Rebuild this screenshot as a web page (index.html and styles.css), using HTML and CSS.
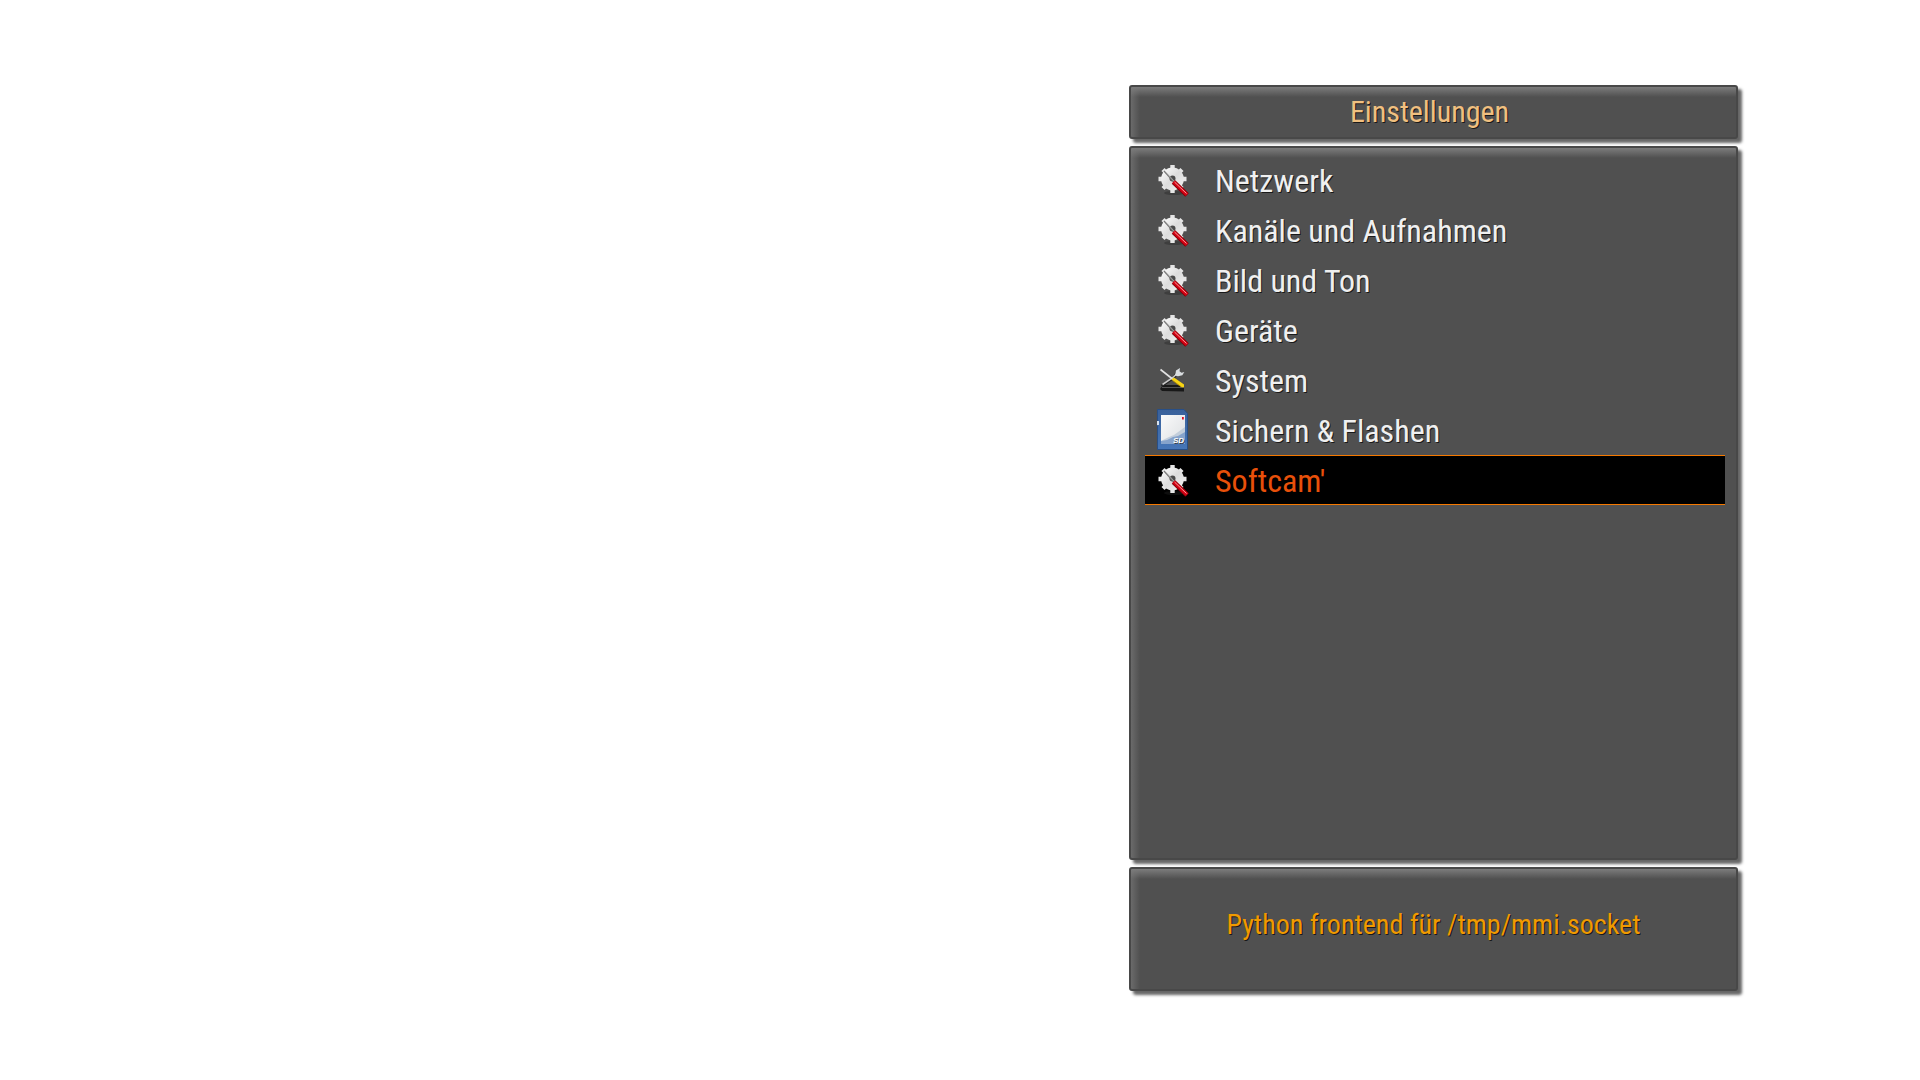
FILE: index.html
```html
<!DOCTYPE html>
<html lang="de">
<head>
  <meta charset="UTF-8">
  <title>Einstellungen</title>
  <link rel="stylesheet" href="styles.css">
</head>
<body>
  <!-- shared icons -->
  <svg class="defs" aria-hidden="true">
    <defs>
      <linearGradient id="metal" x1="0" y1="0" x2="1" y2="1">
        <stop offset="0" stop-color="#fff"/>
        <stop offset="0.5" stop-color="#dcdcdc"/>
        <stop offset="1" stop-color="#f4f4f4"/>
      </linearGradient>
      <linearGradient id="card" x1="0" y1="0" x2="0" y2="1">
        <stop offset="0" stop-color="#3a619a"/>
        <stop offset="1" stop-color="#4676b8"/>
      </linearGradient>
      <linearGradient id="label" x1="0" y1="0" x2="1" y2="1">
        <stop offset="0" stop-color="#fafafa"/>
        <stop offset="1" stop-color="#dcdfe2"/>
      </linearGradient>
      <symbol id="gear" viewBox="0 0 32 32">
        <ellipse cx="17" cy="28" rx="10" ry="2" fill="#222" opacity="0.4"/>
        <path d="M15.500 0v28M1.500 14h28M6 4.500l19 19M25 4.500l-19 19" stroke="#e6e6e6" stroke-width="4.400"/>
        <circle cx="15.500" cy="14" r="11.400" fill="url(#metal)"/>
        <circle cx="15.500" cy="13.500" r="3" fill="#4a4a4a"/>
        <path d="M7 6l10 11" stroke="#777" stroke-width="1.400"/>
        <path d="M8 6l9 10" stroke="#ccc" stroke-width="0.600"/>
        <path d="M16.500 17L30 30" stroke="#7c0008" stroke-width="5"/>
        <path d="M16.500 16.800L30 29.800" stroke="#d20012" stroke-width="3.600"/>
        <path d="M17.500 17l12 11.500" stroke="#ff9c9c" stroke-width="1"/>
      </symbol>
      <symbol id="tools" viewBox="0 0 32 32">
        <path d="M6 20h18l3 3v3.500l-22-.5-2-2z" fill="#181818"/>
        <path d="M5 22.500h21" stroke="#555" stroke-width="1"/>
        <path d="M4.500 21L17 12.500l3-5" stroke="#222" stroke-width="2.600" fill="none"/>
        <path d="M5.500 19.500L16 12.500l4-4" stroke="#c8c8c8" stroke-width="1.600" fill="none"/>
        <path d="M18 10.500l1-5 4-2.500-.5 3.200 2 1.600 2.800-.8-2 3.300-4.300 1z" fill="#d9dde0"/>
        <path d="M3.500 4.500L15.500 14" stroke="#e2e2e2" stroke-width="1.600"/>
        <path d="M14.500 14.500l2.500-2L27 19.500v3l-3-.5z" fill="#f7d414"/>
        <path d="M15.500 15.500l9 6.500" stroke="#a88400" stroke-width="0.800"/>
      </symbol>
      <symbol id="sdcard" viewBox="0 0 32 42">
        <path d="M.5.500H27l3.500 4v36H.5V17h-1v-4h1z" fill="url(#card)" stroke="#284f87" stroke-width="1"/>
        <path d="M0 12h2v4H0z" fill="#d7e2ef"/>
        <path d="M4 6h24v29H4z" fill="url(#label)"/>
        <path d="M4 32l8-4 5-2 11-8v17H4z" fill="#c3cedb"/>
        <path d="M4 35v-3l6-1 6-3 5-1 7-4v12z" fill="#86a3cb"/>
        <path d="M25 8h1.800v2.500H25z" fill="#e01020"/>
        <text x="16" y="34" class="sd-label">SD</text>
      </symbol>
    </defs>
  </svg>

  <main class="screen">
    <header class="panel title">
      <h1>Einstellungen</h1>
    </header>

    <nav class="panel menu">
      <ul>
        <li><a href="#netzwerk"><svg class="icon"><use href="#gear"/></svg>Netzwerk</a></li>
        <li><a href="#kanaele"><svg class="icon"><use href="#gear"/></svg>Kanäle und Aufnahmen</a></li>
        <li><a href="#bild"><svg class="icon"><use href="#gear"/></svg>Bild und Ton</a></li>
        <li><a href="#geraete"><svg class="icon"><use href="#gear"/></svg>Geräte</a></li>
        <li><a href="#system"><svg class="icon"><use href="#tools"/></svg>System</a></li>
        <li><a href="#sichern"><svg class="icon icon-card"><use href="#sdcard"/></svg>Sichern &amp; Flashen</a></li>
        <li><a href="#softcam" class="selected" aria-current="true"><svg class="icon"><use href="#gear"/></svg>Softcam'</a></li>
      </ul>
    </nav>

    <footer class="panel info">
      <p>Python frontend für /tmp/mmi.socket</p>
    </footer>
  </main>
</body>
</html>
```

FILE: styles.css
```css
* {
  box-sizing: border-box;
}
body {
  margin: 0;
  min-height: 100vh;
  padding: 85px 182px 89px;
  display: flex;
  justify-content: flex-end;
  background-color: #fff;
  font-family: "Roboto Condensed", Roboto, sans-serif;
}
h1, p, ul {
  margin: 0;
  padding: 0;
  font-weight: normal;
}
.defs {
  position: absolute;
  width: 0;
  height: 0;
}
.screen {
  width: 100%;
  max-width: 609px;
  display: flex;
  flex-direction: column;
  gap: 7px;
}
.panel {
  background-color: #505050;
  background-image:
    linear-gradient(to bottom, #7c7c7c, rgba(80, 80, 80, 0) 10px),
    linear-gradient(to right, #6a6a6a, rgba(80, 80, 80, 0) 9px);
  border: 2px solid #484848;
  border-radius: 3px;
  box-shadow: 4px 4px 3px rgba(0, 0, 0, 0.6);
  text-shadow: 1px 1px 0 rgba(0, 0, 0, 0.7);
}
.title {
  padding: 6px 20px 6px 12px;
  text-align: center;
}
.title h1 {
  font-size: 30px;
  line-height: 38px;
  color: #f0c080;
}
.menu {
  flex: 1;
  padding: 7px 11px 7px 14px;
}
.menu ul {
  list-style: none;
}
.menu a {
  display: flex;
  align-items: center;
  height: 50px;
  padding: 2px 0 0 12px;
  border: solid transparent;
  border-width: 1px 0;
  font-size: 32px;
  color: #f0f0f0;
  text-decoration: none;
}
.menu a.selected {
  background-color: #000;
  border-color: #f57900;
  color: #e8500a;
}
.icon {
  width: 32px;
  height: 32px;
  margin-right: 26px;
}
.icon-card {
  height: 42px;
  margin-bottom: 2px;
}
.sd-label {
  font: italic bold 8px "Liberation Sans", sans-serif;
  fill: #fff;
}
.info {
  min-height: 124px;
  padding: 12px 16px 22px;
  display: flex;
  align-items: center;
  justify-content: center;
}
.info p {
  font-size: 28px;
  color: #f09a00;
}
```
